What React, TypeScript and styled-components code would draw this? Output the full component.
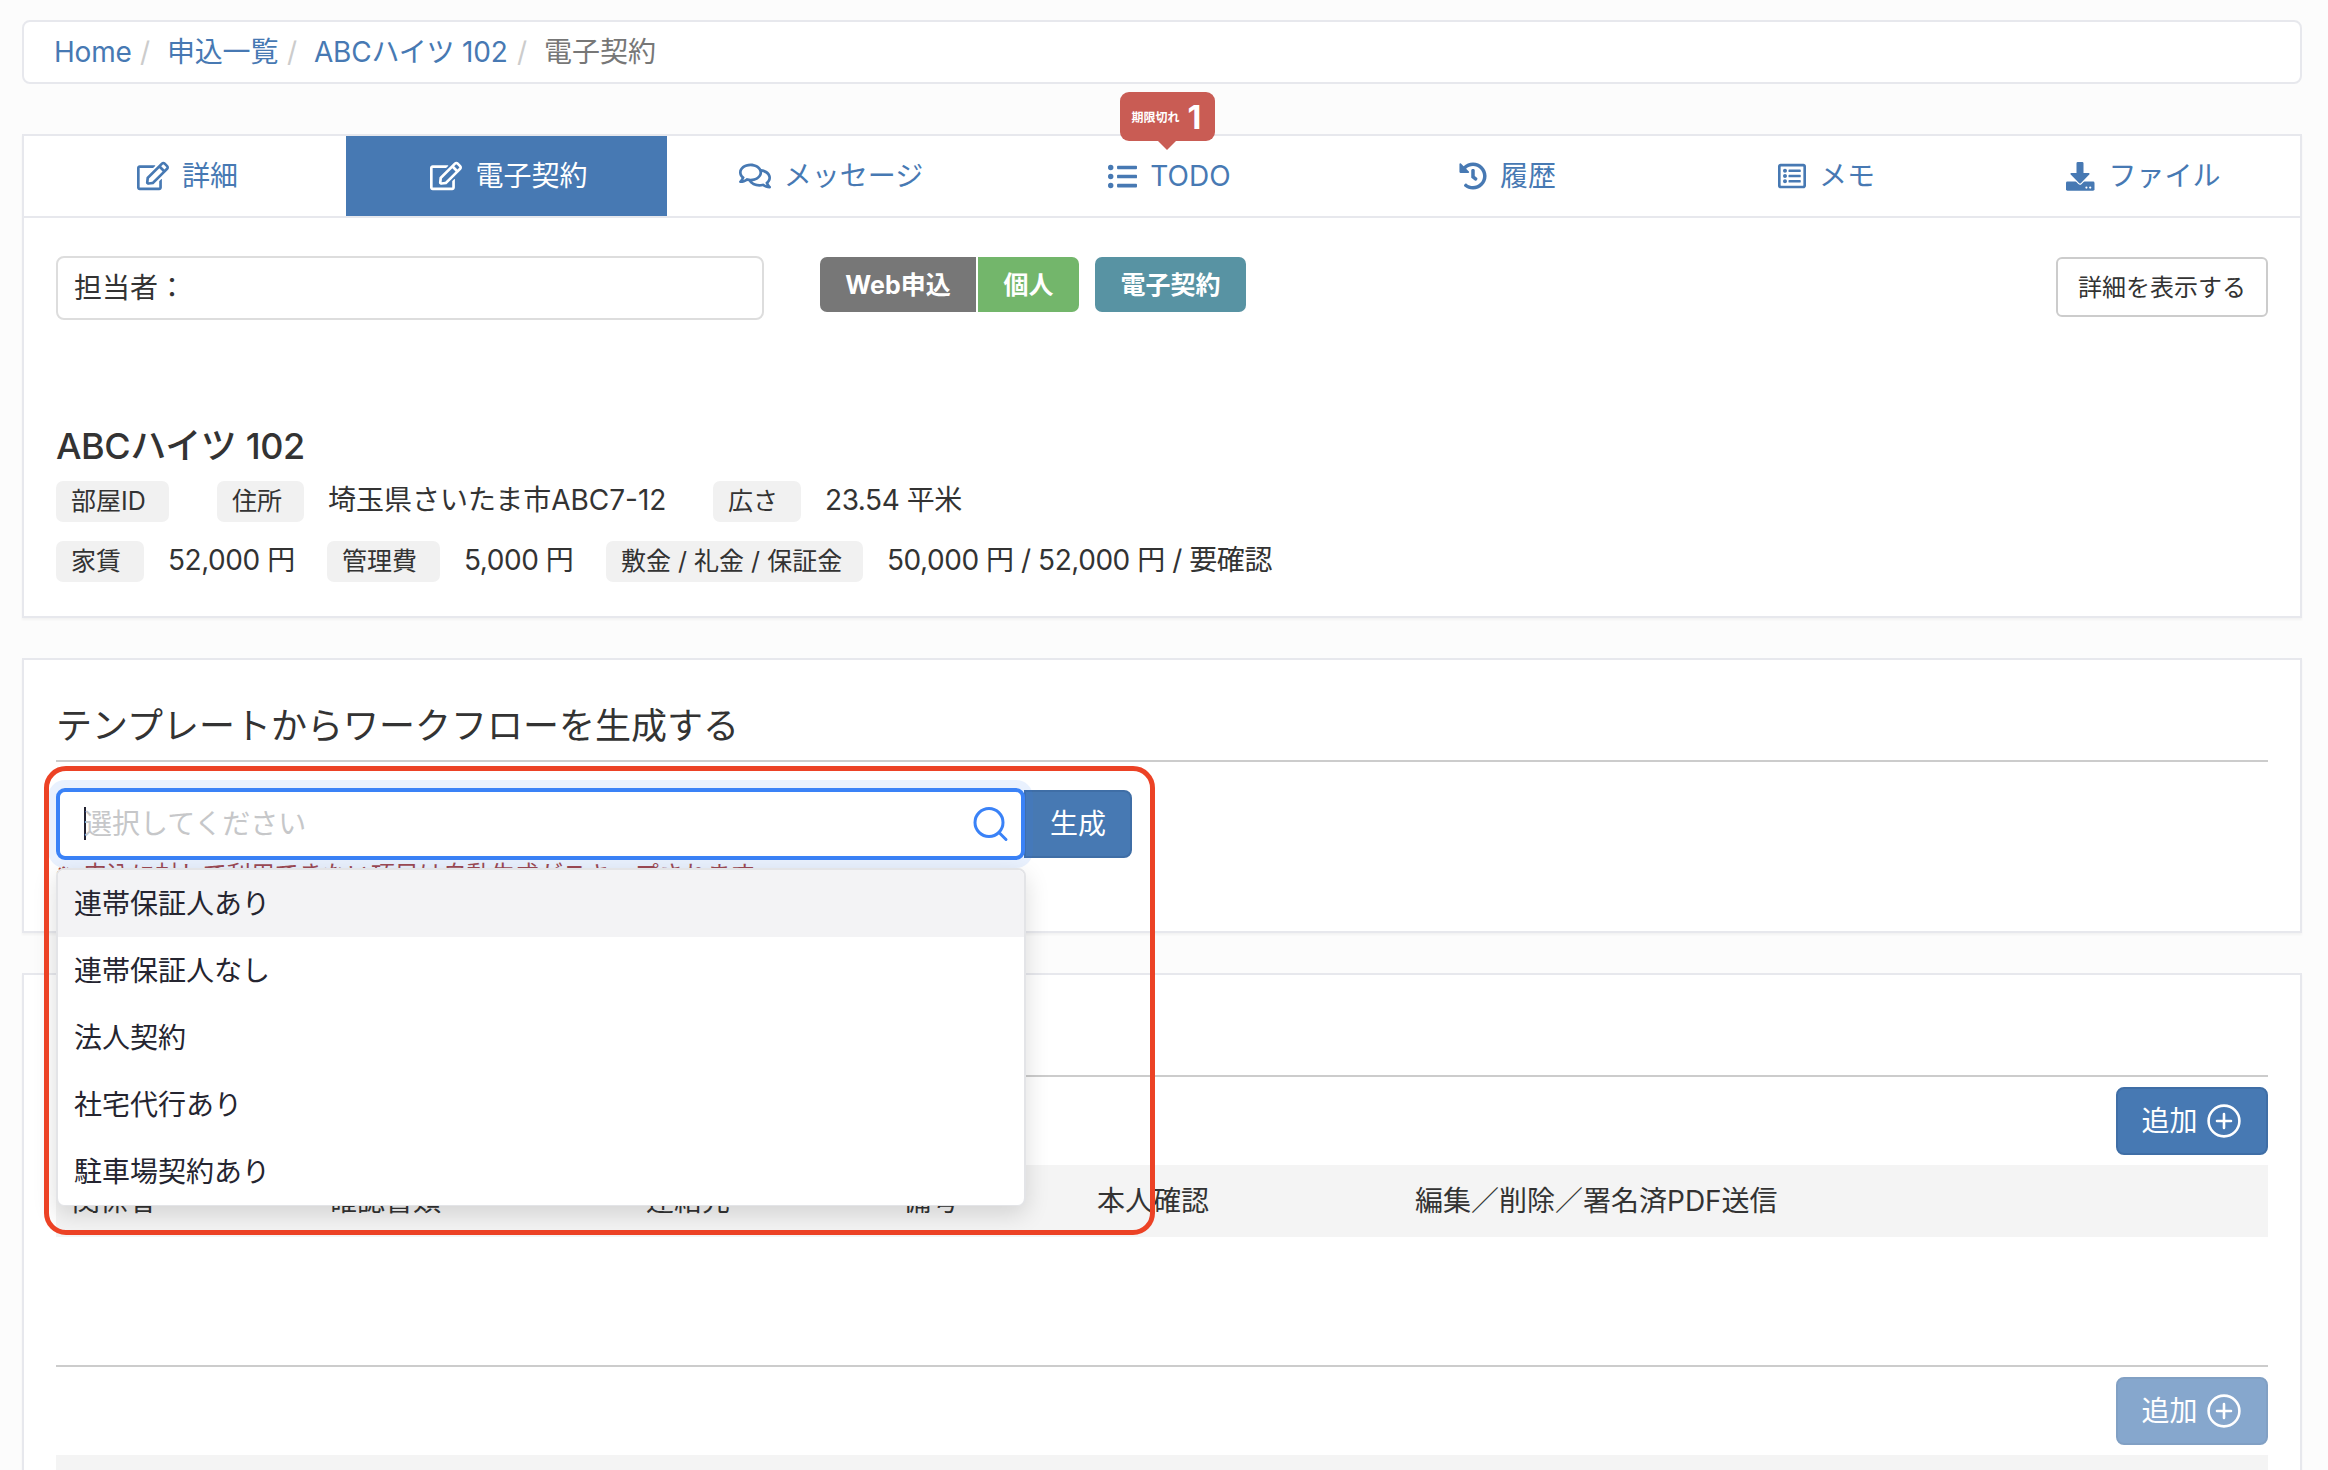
import React from "react";
import styled, { createGlobalStyle, css } from "styled-components";
import {
  FaRegEdit,
  FaRegComments,
  FaListUl,
  FaHistory,
  FaRegListAlt,
} from "react-icons/fa";

const GlobalStyle = createGlobalStyle`
  * { box-sizing: border-box; }
  body {
    margin: 0;
    background: #fcfcfc;
    color: #333;
    font-family: Inter, "Noto Sans CJK JP", sans-serif;
    font-size: 28px;
    line-height: 40px;
  }
`;

const Page = styled.main`
  height: 1470px;
  padding: 20px 26px 0 22px;
  overflow: hidden;
`;

const Breadcrumb = styled.nav`
  display: flex;
  align-items: center;
  height: 64px;
  padding: 0 30px;
  margin-bottom: 50px;
  background: #fff;
  border: 2px solid #e7e8ed;
  border-radius: 8px;
`;

const Crumb = styled.a<{ $w: number; $current?: boolean }>`
  width: ${(p) => p.$w}px;
  white-space: nowrap;
  letter-spacing: ${(p) => (p.$current ? 0 : -0.2)}px;
  color: ${(p) => (p.$current ? "#777" : "#4779b3")};
`;

const Slash = styled.span`
  width: 27px;
  color: #ccc;
`;

const Panel = styled.section<{ $h: number; $gap?: number }>`
  height: ${(p) => p.$h}px;
  margin-bottom: ${(p) => p.$gap ?? 0}px;
  background: #fff;
  border: 2px solid #e7e8ed;
  box-shadow: 0 2px 2px rgba(0, 0, 0, 0.04);
`;

const Tabs = styled.div`
  display: grid;
  grid-template-columns: 322px 321px 323px 354px 322px 316px 1fr;
  height: 82px;
  border-bottom: 2px solid #e7e8ed;
`;

const Tab = styled.a<{ $active?: boolean }>`
  position: relative;
  display: flex;
  align-items: center;
  justify-content: center;
  gap: 13px;
  padding-left: 5px;
  white-space: nowrap;
  color: ${(p) => (p.$active ? "#fff" : "#4779b3")};
  background: ${(p) => (p.$active ? "#4779b3" : "transparent")};
  svg { flex: none; }
`;

const Callout = styled.div`
  position: absolute;
  left: 130px;
  top: -44px;
  width: 95px;
  height: 49px;
  display: flex;
  align-items: center;
  justify-content: center;
  gap: 8px;
  padding: 2px 2px 0 0;
  border-radius: 9px;
  background: #c95c54;
  color: #fff;
  font-weight: 700;
  &::after {
    content: "";
    position: absolute;
    left: 37px;
    top: 48px;
    border: 10px solid transparent;
    border-top-color: #c95c54;
    border-bottom: 0;
  }
`;

const CalloutLabel = styled.span`
  font-size: 12px;
`;

const CalloutCount = styled.span`
  font-size: 32px;
`;

const Body = styled.div`
  padding: 0 32px;
`;

const TopRow = styled.div`
  display: flex;
  align-items: flex-start;
  padding-top: 38px;
  height: 198px;
`;

const Assignee = styled.div`
  width: 708px;
  height: 64px;
  padding: 10px 16px;
  margin-right: 56px;
  border: 2px solid #ddd;
  border-radius: 8px;
`;

const Badge = styled.span<{ $bg: string; $w: number; $mr: number; $r: string }>`
  display: flex;
  align-items: center;
  justify-content: center;
  width: ${(p) => p.$w}px;
  height: 55px;
  margin: 1px ${(p) => p.$mr}px 0 0;
  background: ${(p) => p.$bg};
  border-radius: ${(p) => p.$r};
  color: #fff;
  font-size: 25px;
  font-weight: 700;
`;

const OutlineButton = styled.button`
  width: 212px;
  height: 60px;
  margin: 1px 0 0 auto;
  padding: 1px 0 0;
  border: 2px solid #ccc;
  border-radius: 6px;
  background: #fff;
  color: #333;
  font: inherit;
  font-size: 24px;
`;

const PropertyName = styled.h2`
  margin: 0 0 13px;
  height: 52px;
  font-size: 36px;
  line-height: 60px;
  font-weight: 500;
  letter-spacing: -0.4px;
`;

const Facts = styled.div`
  display: flex;
  align-items: center;
  height: 41px;
  margin-bottom: 19px;
`;

const Tag = styled.span<{ $w: number }>`
  width: ${(p) => p.$w}px;
  height: 41px;
  padding-left: 15px;
  border-radius: 7px;
  background: #f1f1f1;
  font-size: 25px;
  line-height: 40px;
  white-space: nowrap;
`;

const Value = styled.span<{ $w: number; $numeric?: boolean }>`
  width: ${(p) => p.$w}px;
  height: 41px;
  padding-left: 24px;
  white-space: nowrap;
  line-height: 38px;
  letter-spacing: ${(p) => (p.$numeric ? -0.45 : 0)}px;
`;

const SectionTitle = styled.h3`
  margin: 0;
  height: 102px;
  padding-top: 36px;
  border-bottom: 2px solid #ccc;
  font-size: 36px;
  line-height: 60px;
  font-weight: 400;
`;

const Generator = styled.div`
  position: relative;
  display: flex;
  align-items: center;
  height: 72px;
  margin-top: 26px;
`;

const Select = styled.div`
  position: relative;
  z-index: 1;
  display: flex;
  align-items: center;
  width: 969px;
  height: 72px;
  padding: 0 12px 1px 24px;
  border: 4px solid #3a82f7;
  border-radius: 9px;
  background: #fff;
  box-shadow: 0 0 0 8px rgba(58, 130, 247, 0.11);
`;

const Caret = styled.i`
  width: 2px;
  height: 33px;
  margin-right: -2px;
  background: #222230;
`;

const Placeholder = styled.span`
  flex: 1;
  color: #c6c7c9;
`;

const buttonBase = css`
  height: 68px;
  padding: 0;
  border: 2px solid #3f6ea6;
  background: #4779b3;
  color: #fff;
  font: inherit;
`;

const GenerateButton = styled.button`
  ${buttonBase}
  width: 108px;
  margin-left: -1px;
  border-radius: 0 8px 8px 0;
`;

const AddButton = styled.button<{ $disabled?: boolean }>`
  ${buttonBase}
  display: flex;
  align-items: center;
  justify-content: center;
  gap: 9px;
  width: 152px;
  margin: 10px 0 10px auto;
  padding-right: 2px;
  border-radius: 8px;
  opacity: ${(p) => (p.$disabled ? 0.65 : 1)};
`;

const Menu = styled.ul`
  position: absolute;
  z-index: 3;
  left: 0;
  top: 80px;
  width: 970px;
  height: 338px;
  margin: 0;
  padding: 0;
  list-style: none;
  overflow: hidden;
  border: 2px solid #e3e4e7;
  border-bottom-width: 1px;
  border-radius: 8px;
  background: #fff;
  box-shadow: 0 8px 24px rgba(0, 0, 0, 0.14);
`;

const Option = styled.li<{ $active?: boolean }>`
  height: 67px;
  padding: 0 16px;
  line-height: 68px;
  color: #252530;
  background: ${(p) => (p.$active ? "#f3f3f5" : "transparent")};
`;

const Note = styled.p`
  display: flex;
  gap: 12px;
  margin: -2px 0 0;
  font-size: 24px;
  line-height: 34px;
  color: #a94442;
`;

const NoteMark = styled.span`
  line-height: 29px;
`;

const Highlight = styled.div`
  position: absolute;
  z-index: 4;
  left: -12px;
  top: -22px;
  width: 1111px;
  height: 469px;
  border: 5px solid #ec4225;
  border-radius: 22px;
  pointer-events: none;
`;

const TableHead = styled.div`
  display: grid;
  grid-template-columns: 257px 317px 257px 194px 318px 1fr;
  height: 72px;
  line-height: 72px;
  background: #f4f4f4;
`;

const HeadCell = styled.span`
  padding-left: 16px;
  white-space: nowrap;
`;

const Rule = styled.div<{ $top: number }>`
  height: 2px;
  margin-top: ${(p) => p.$top}px;
  background: #ccc;
`;

const SearchIcon = () => (
  <svg width="36" height="36" viewBox="0 0 36 36" fill="none" stroke="#3a82f7" strokeWidth="3" strokeLinecap="round">
    <circle cx="16" cy="16.5" r="14" />
    <path d="M26 26.5 L33 33.5" />
  </svg>
);

const PlusCircle = () => (
  <svg width="34" height="34" viewBox="0 0 34 34" fill="none" stroke="#fff" strokeLinecap="round">
    <circle cx="17" cy="17" r="15.4" strokeWidth="2.6" />
    <path d="M17 10v14M10 17h14" strokeWidth="2.6" />
  </svg>
);

const DownloadIcon = () => (
  <svg width="29" height="29" viewBox="0 0 29 29" fill="currentColor">
    <rect x="0" y="19.5" width="28.5" height="9.2" rx="1.4" />
    <path
      d="M11.8 0h4.4a1.3 1.3 0 0 1 1.3 1.3V11h5.2c.9 0 1.2.8.6 1.4l-8.5 8.8c-.5.5-1.1.5-1.6 0l-8.5-8.800C4.100 11.800 4.400 11 5.300 11h5.200V1.300A1.300 1.300 0 0 1 11.800 0z"
      stroke="#fff"
      strokeWidth="2.4"
      paintOrder="stroke"
    />
    <circle cx="20.4" cy="25.6" r="1.1" fill="#fff" />
    <circle cx="24.2" cy="25.6" r="1.1" fill="#fff" />
  </svg>
);

const tabs = [
  { label: "詳細", icon: <FaRegEdit size={32} /> },
  { label: "電子契約", icon: <FaRegEdit size={32} />, active: true },
  { label: "メッセージ", icon: <FaRegComments size={32} /> },
  { label: "TODO", icon: <FaListUl size={29} />, overdue: 1 },
  { label: "履歴", icon: <FaHistory size={28} /> },
  { label: "メモ", icon: <FaRegListAlt size={28} /> },
  { label: "ファイル", icon: <DownloadIcon /> },
];

const options = ["連帯保証人あり", "連帯保証人なし", "法人契約", "社宅代行あり", "駐車場契約あり"];
const columns = ["関係者", "確認書類", "連絡先", "備考", "本人確認", "編集／削除／署名済PDF送信"];

export default function App() {
  return (
    <Page>
      <GlobalStyle />
      <Breadcrumb>
        <Crumb $w={86}>Home</Crumb>
        <Slash>/</Slash>
        <Crumb $w={120}>申込一覧</Crumb>
        <Slash>/</Slash>
        <Crumb $w={203}>ABCハイツ 102</Crumb>
        <Slash>/</Slash>
        <Crumb $w={112} $current>電子契約</Crumb>
      </Breadcrumb>

      <Panel $h={484} $gap={40}>
        <Tabs>
          {tabs.map((t) => (
            <Tab key={t.label} $active={t.active}>
              {t.icon}
              {t.label}
              {t.overdue && (
                <Callout>
                  <CalloutLabel>期限切れ</CalloutLabel>
                  <CalloutCount>{t.overdue}</CalloutCount>
                </Callout>
              )}
            </Tab>
          ))}
        </Tabs>
        <Body>
          <TopRow>
            <Assignee>担当者：</Assignee>
            <Badge $bg="#777" $w={156} $mr={2} $r="7px 0 0 7px">Web申込</Badge>
            <Badge $bg="#73b66b" $w={101} $mr={16} $r="0 7px 7px 0">個人</Badge>
            <Badge $bg="#5893a3" $w={151} $mr={0} $r="7px">電子契約</Badge>
            <OutlineButton>詳細を表示する</OutlineButton>
          </TopRow>
          <PropertyName>ABCハイツ 102</PropertyName>
          <Facts>
            <Tag $w={113}>部屋ID</Tag>
            <Value $w={48} />
            <Tag $w={87}>住所</Tag>
            <Value $w={409}>埼玉県さいたま市ABC7-12</Value>
            <Tag $w={88}>広さ</Tag>
            <Value $w={200} $numeric>23.54 平米</Value>
          </Facts>
          <Facts>
            <Tag $w={88}>家賃</Tag>
            <Value $w={183} $numeric>52,000 円</Value>
            <Tag $w={113}>管理費</Tag>
            <Value $w={166} $numeric>5,000 円</Value>
            <Tag $w={257}>敷金 / 礼金 / 保証金</Tag>
            <Value $w={420} $numeric>50,000 円 / 52,000 円 / 要確認</Value>
          </Facts>
        </Body>
      </Panel>

      <Panel $h={275} $gap={40}>
        <Body>
          <SectionTitle>テンプレートからワークフローを生成する</SectionTitle>
          <Generator>
            <Select>
              <Caret />
              <Placeholder>選択してください</Placeholder>
              <SearchIcon />
            </Select>
            <GenerateButton>生成</GenerateButton>
            <Menu>
              {options.map((o, i) => (
                <Option key={o} $active={i === 0}>{o}</Option>
              ))}
            </Menu>
            <Highlight />
          </Generator>
          <Note>
            <NoteMark>※</NoteMark>
            <span>申込に対して利用できない項目は自動生成がスキップされます</span>
          </Note>
        </Body>
      </Panel>

      <Panel $h={600}>
        <Body>
          <Rule $top={100} />
          <AddButton>追加<PlusCircle /></AddButton>
          <TableHead>
            {columns.map((c) => <HeadCell key={c}>{c}</HeadCell>)}
          </TableHead>
          <Rule $top={128} />
          <AddButton $disabled>追加<PlusCircle /></AddButton>
          <TableHead />
        </Body>
      </Panel>
    </Page>
  );
}
